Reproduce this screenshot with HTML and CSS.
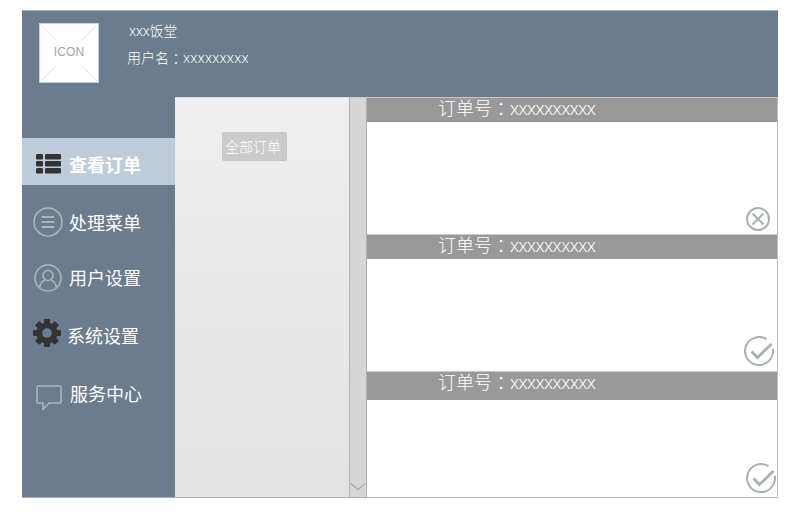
FILE: index.html
```
<!DOCTYPE html>
<html lang="zh-CN">
<head>
<meta charset="utf-8">
<title>xxx饭堂</title>
<link rel="stylesheet" href="styles.css">
</head>
<body>
<div class="app">
  <header class="header">
    <div class="logo">
      <svg class="logo-lines" viewBox="0 0 60 60"><path d="M1 1L17 17M59 1L43 17M1 59L17 43M59 59L43 43"/></svg>
      <span class="logo-text">ICON</span>
    </div>
    <div class="account">
      <div class="shop"><span class="latin">xxx</span>饭堂</div>
      <div class="user">用户名<span class="colon" lang="zh-TW">：</span><span class="latin">xxxxxxxxx</span></div>
    </div>
  </header>
  <div class="body">
    <nav class="sidebar">
      <a class="item orders-link active">
        <svg class="icon" viewBox="0 0 30 30"><g fill="#333"><rect x="3" y="5" width="7" height="5.5" rx="1.3"/><rect x="12" y="5" width="16" height="5.5" rx="1.3"/><rect x="3" y="12" width="7" height="5.5" rx="1.3"/><rect x="12" y="12" width="16" height="5.5" rx="1.3"/><rect x="3" y="19" width="7" height="5.5" rx="1.3"/><rect x="12" y="19" width="16" height="5.5" rx="1.3"/></g></svg>
        <span class="label">查看订单</span>
      </a>
      <a class="item dishes-link">
        <svg class="icon line" viewBox="0 0 30 30"><circle cx="15" cy="15" r="14"/><path stroke-width="2.2" stroke-linecap="round" d="M9.500 10H20.500M9.500 15H20.500M9.500 20H20.500"/></svg>
        <span class="label">处理菜单</span>
      </a>
      <a class="item users-link">
        <svg class="icon line" viewBox="0 0 30 30"><circle cx="15" cy="15" r="13"/><circle cx="15" cy="12.500" r="5"/><path d="M6.500 24.500C7 20.500 9 18.500 12 17M23.500 24.500C23 20.500 21 18.500 18 17"/></svg>
        <span class="label">用户设置</span>
      </a>
      <a class="item system-link">
        <svg class="icon" viewBox="0 0 30 30"><g fill="#333"><rect x="12" y="1" width="6" height="28" rx="1"/><rect x="12" y="1" width="6" height="28" rx="1" transform="rotate(45 15 15)"/><rect x="12" y="1" width="6" height="28" rx="1" transform="rotate(90 15 15)"/><rect x="12" y="1" width="6" height="28" rx="1" transform="rotate(135 15 15)"/><circle cx="15" cy="15" r="10.500"/></g><circle cx="15" cy="15" r="4.800" fill="#6a7c8d"/></svg>
        <span class="label">系统设置</span>
      </a>
      <a class="item service-link">
        <svg class="icon line" viewBox="0 0 30 30"><path stroke-linejoin="round" d="M5 4H27Q28 4 28 5V20Q28 21 27 21H16L10 27.500V21H5Q4 21 4 20V5Q4 4 5 4Z"/></svg>
        <span class="label">服务中心</span>
      </a>
    </nav>
    <section class="filters"><button class="all">全部订单</button></section>
    <div class="scrollbar"><svg class="arrow" viewBox="0 0 18 10"><path d="M1 1L9 8L17 1"/></svg></div>
    <main class="orders">
      <article class="order first">
        <h2 class="order-title">订单号<span class="colon" lang="zh-TW">：</span><span class="latin">xxxxxxxxxx</span></h2>
        <svg class="status cancel" viewBox="0 0 24 24"><circle cx="12" cy="12" r="11"/><path d="M6.500 6.500L17.500 17.500M17.500 6.500L6.500 17.500"/></svg>
      </article>
      <article class="order second">
        <h2 class="order-title">订单号<span class="colon" lang="zh-TW">：</span><span class="latin">xxxxxxxxxx</span></h2>
        <svg class="status done" viewBox="0 0 30 30"><path d="M22.500 3.200A14 14 0 1 0 28.900 13"/><path stroke-width="2.800" d="M7.500 15.500L13.500 21.500L27.500 8"/></svg>
      </article>
      <article class="order third">
        <h2 class="order-title">订单号<span class="colon" lang="zh-TW">：</span><span class="latin">xxxxxxxxxx</span></h2>
        <svg class="status done" viewBox="0 0 30 30"><path d="M22.500 3.200A14 14 0 1 0 28.900 13"/><path stroke-width="2.800" d="M7.500 15.500L13.500 21.500L27.500 8"/></svg>
      </article>
    </main>
  </div>
</div>
</body>
</html>
```
FILE: styles.css
```
* { box-sizing: border-box; }
body {
  margin: 0;
  padding: 10px 27px 0 22px;
  background: #fff;
  color: #fff;
  font-family: "Noto Sans CJK SC", sans-serif;
  font-weight: 300;
}
.app { width: 756px; height: 488px; background: #6a7c8d; }
.header { display: flex; height: 87px; border-top: 1px solid #a5b0ba; }
.logo {
  display: grid;
  place-items: center;
  width: 60px;
  height: 60px;
  margin: 12px 0 0 17px;
  background: #fff;
  border: 1px solid #c3d1df;
}
.logo > * { grid-area: 1 / 1; }
.logo-lines { width: 58px; height: 58px; fill: none; stroke: #e3e6e8; }
.logo-text { margin-top: -2px; font: 12px "Liberation Sans", sans-serif; color: #9ba5aa; letter-spacing: .1px; }
.account { margin: 6px 0 0 28px; font-size: 14px; line-height: 27px; white-space: nowrap; }
.shop { padding-left: 2px; font-size: 13.7px; }
.latin { font-family: "Noto Sans", sans-serif; font-weight: 300; }
.user .latin { letter-spacing: .25px; }
.colon { position: relative; top: 1px; font-family: "Noto Sans CJK TC", sans-serif; }
.body { display: flex; height: 401px; }
.sidebar { width: 153px; padding-top: 41px; border-bottom: 1px solid #a5b0ba; }
.item { display: flex; align-items: center; height: 47px; padding-left: 11px; }
.icon { flex: none; width: 30px; height: 30px; }
.line { fill: none; stroke: #a7b8ba; stroke-width: 1.6; }
.label { margin-left: 6px; font-size: 18px; font-weight: 400; line-height: 28px; white-space: nowrap; }
.active { background: #bdccda; }
.active .icon { margin-top: 5px; }
.active .label { margin-top: 5px; font-weight: 700; }
.dishes-link { margin-top: 14px; }
.dishes-link .icon { margin-top: -1px; }
.dishes-link .label, .users-link .label { margin: -2px 0 0 6px; }
.users-link { margin-top: 8px; }
.system-link { margin-top: 9px; padding-left: 10px; }
.system-link .icon { margin-top: -1px; }
.system-link .label { margin: 3px 0 0 5px; }
.service-link { margin-top: 14px; padding-left: 11px; }
.service-link .icon { margin-top: 4px; }
.service-link .label { margin: -4px 0 0 7px; }
.filters {
  width: 174px;
  padding: 34px 0 0 47px;
  background: linear-gradient(#efefef, #e3e3e3);
  border-top: 1px solid #dadfe3;
  border-bottom: 1px solid #b5b5b5;
}
.all {
  display: block;
  width: 65px;
  height: 29px;
  padding: 0 0 0 2px;
  border: 1px solid #c8c8c8;
  border-radius: 2px;
  background: #cbcbcb;
  color: #fff;
  font: 300 14px/27px "Noto Sans CJK SC", sans-serif;
  text-align: left;
  white-space: nowrap;
}
.scrollbar {
  display: flex;
  align-items: flex-end;
  width: 18px;
  padding: 0 0 5px;
  background: #d6d6d6;
  border: 1px solid #b0b0b0;
  border-top-color: #c5cace;
}
.arrow { width: 16px; height: 10px; fill: none; stroke: #a0a9ac; stroke-width: 1.3; }
.orders { display: flex; flex-direction: column; flex: 1; background: #fff; border-right: 1px solid #bebebe; border-bottom: 1px solid #b5b5b5; }
.order { display: flex; flex-direction: column; align-items: flex-end; justify-content: space-between; border-top: 1px solid #c9c9c9; }
.first { height: 137px; padding-bottom: 3px; }
.second { height: 137px; padding-bottom: 5px; }
.third { flex: 1; padding-bottom: 4px; }
.order-title {
  align-self: stretch;
  height: 24px;
  margin: 0;
  padding-left: 71px;
  background: #999;
  font-size: 18px;
  font-weight: 300;
  line-height: 18px;
  white-space: nowrap;
}
.third .order-title { height: 28px; }
.order-title .latin { letter-spacing: -.55px; }
.status { fill: none; stroke: #a8b0b1; stroke-width: 2; }
.cancel { width: 24px; height: 24px; margin-right: 7px; }
.done { width: 30px; height: 30px; margin-right: 3px; }
.third .done { margin-right: 1px; }
```
